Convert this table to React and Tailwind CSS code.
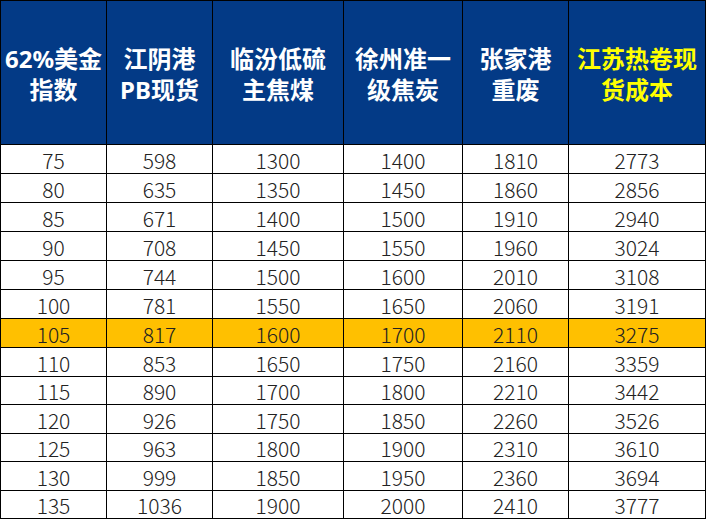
const headers = [
  ["62%美金", "指数"],
  ["江阴港", "PB现货"],
  ["临汾低硫", "主焦煤"],
  ["徐州准一", "级焦炭"],
  ["张家港", "重废"],
  ["江苏热卷现", "货成本"],
];

const rows = [
  [75, 598, 1300, 1400, 1810, 2773],
  [80, 635, 1350, 1450, 1860, 2856],
  [85, 671, 1400, 1500, 1910, 2940],
  [90, 708, 1450, 1550, 1960, 3024],
  [95, 744, 1500, 1600, 2010, 3108],
  [100, 781, 1550, 1650, 2060, 3191],
  [105, 817, 1600, 1700, 2110, 3275],
  [110, 853, 1650, 1750, 2160, 3359],
  [115, 890, 1700, 1800, 2210, 3442],
  [120, 926, 1750, 1850, 2260, 3526],
  [125, 963, 1800, 1900, 2310, 3610],
  [130, 999, 1850, 1950, 2360, 3694],
  [135, 1036, 1900, 2000, 2410, 3777],
];

// row heights picked to line up with the screenshot grid lines
const rowH = ["h-[28px]", "h-[28px]", "h-[28px]", "h-[28px]", "h-[28px]", "h-[28px]", "h-[28px]", "h-[28px]", "h-[27px]", "h-[28px]", "h-[27px]", "h-[28px]", "h-[27px]"];

const App = () => {
  return (
    <div className="w-[708px] h-[521px] bg-white overflow-hidden">
      {/* table */}
      <div className="w-[706px] bg-black p-px grid grid-cols-[105px_105px_130px_118px_105px_136px] gap-px">
        {/* header */}
        {headers.map((h, i) => (
          <div
            key={i}
            className={`h-[143px] bg-[#033a86] flex flex-col items-center justify-center pt-[3px] font-bold text-[24px] leading-[31px] ${i === 5 ? "text-[#ffff00]" : "text-white"}`}
            style={{ fontFamily: '"Noto Sans", "Noto Sans CJK SC", sans-serif' }}
          >
            <span>{h[0]}</span>
            <span>{h[1]}</span>
          </div>
        ))}
        {/* body */}
        {rows.map((r, ri) =>
          r.map((v, ci) => (
            <div
              key={ri + "-" + ci}
              className={`${rowH[ri]} ${ri === 6 ? "bg-[#ffc000]" : "bg-white"} flex items-center justify-center pt-[3px] text-[21px] font-light text-[#222]`}
              style={{ fontFamily: '"Noto Sans CJK SC", sans-serif' }}
            >
              {v}
            </div>
          ))
        )}
      </div>
    </div>
  );
};

export default App;
